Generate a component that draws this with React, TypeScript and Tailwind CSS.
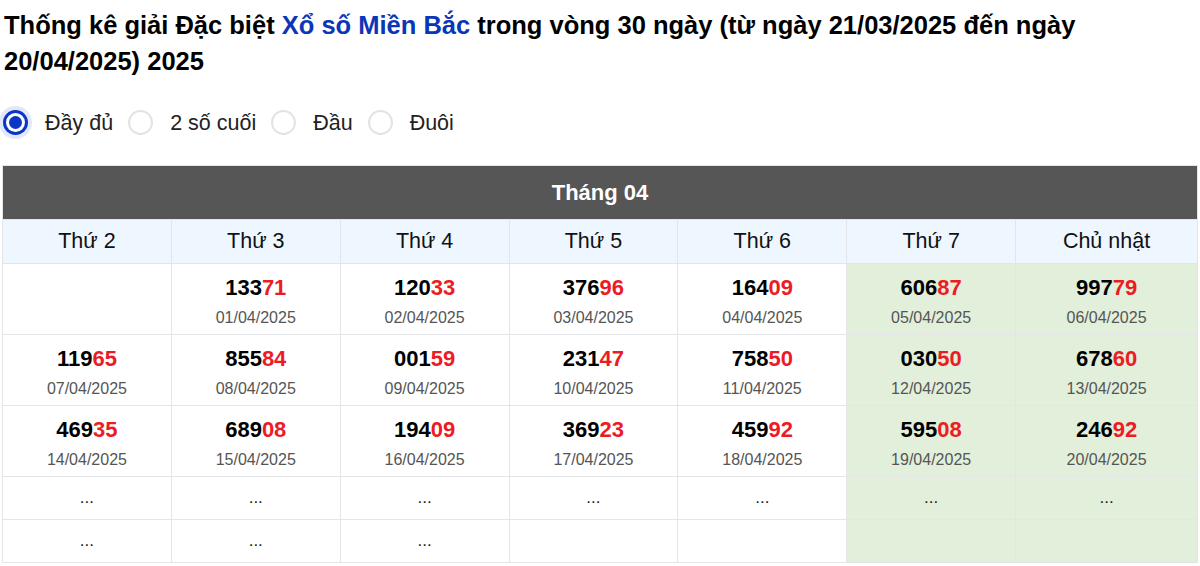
import React from "react";

type Cell = { n: string; d: string } | "..." | null;

const days = ["Thứ 2", "Thứ 3", "Thứ 4", "Thứ 5", "Thứ 6", "Thứ 7", "Chủ nhật"];

const rows: Cell[][] = [
  [
    null,
    { n: "13371", d: "01/04/2025" },
    { n: "12033", d: "02/04/2025" },
    { n: "37696", d: "03/04/2025" },
    { n: "16409", d: "04/04/2025" },
    { n: "60687", d: "05/04/2025" },
    { n: "99779", d: "06/04/2025" },
  ],
  [
    { n: "11965", d: "07/04/2025" },
    { n: "85584", d: "08/04/2025" },
    { n: "00159", d: "09/04/2025" },
    { n: "23147", d: "10/04/2025" },
    { n: "75850", d: "11/04/2025" },
    { n: "03050", d: "12/04/2025" },
    { n: "67860", d: "13/04/2025" },
  ],
  [
    { n: "46935", d: "14/04/2025" },
    { n: "68908", d: "15/04/2025" },
    { n: "19409", d: "16/04/2025" },
    { n: "36923", d: "17/04/2025" },
    { n: "45992", d: "18/04/2025" },
    { n: "59508", d: "19/04/2025" },
    { n: "24692", d: "20/04/2025" },
  ],
  ["...", "...", "...", "...", "...", "...", "..."],
  ["...", "...", "...", null, null, null, null],
];

const options = ["Đầy đủ", "2 số cuối", "Đầu", "Đuôi"];

function Radio({ checked }: { checked: boolean }) {
  if (checked) {
    return (
      <span className="flex h-[25px] w-[25px] items-center justify-center rounded-full bg-[#0b36c4] shadow-[0_0_0_4px_rgba(13,60,220,0.12)]">
        <span className="flex h-[19px] w-[19px] items-center justify-center rounded-full bg-white">
          <span className="h-[13px] w-[13px] rounded-full bg-[#0b36c4]" />
        </span>
      </span>
    );
  }
  return <span className="block h-[25px] w-[25px] rounded-full border-2 border-[#e1e3e7] bg-white" />;
}

export default function App() {
  return (
    <div className="bg-white px-[2px] text-black" style={{ fontFamily: '"Liberation Sans", Arial, sans-serif' }}>
      <h1 className="pl-[2px] pt-[7px] text-[25.5px] font-bold leading-[36px]">
        Thống kê giải Đặc biệt <span className="text-[#0b36b8]">Xổ số Miền Bắc</span> trong vòng 30 ngày (từ ngày
        21/03/2025 đến ngày 20/04/2025) 2025
      </h1>

      <div className="mt-[31px] flex items-center">
        {options.map((o, i) => (
          <label key={o} className="flex items-center">
            <span className={i === 0 ? "ml-[1px]" : "ml-[15px]"}>
              <Radio checked={i === 0} />
            </span>
            <span className="ml-[17px] text-[21.5px] leading-[24px] text-[#222]">{o}</span>
          </label>
        ))}
      </div>

      <table className="mt-[30px] w-full table-fixed border-collapse border border-[#e3e5e8]">
        <colgroup>
          <col className="w-[14.13%]" />
          <col className="w-[14.13%]" />
          <col className="w-[14.13%]" />
          <col className="w-[14.13%]" />
          <col className="w-[14.13%]" />
          <col className="w-[14.13%]" />
          <col />
        </colgroup>
        <thead>
          <tr>
            <th colSpan={7} className="h-[54px] bg-[#565656] text-[22px] font-bold text-white">
              Tháng 04
            </th>
          </tr>
          <tr>
            {days.map((d) => (
              <th
                key={d}
                className="h-[44px] border border-[#e3e5e8] bg-[#eef6ff] text-[21.5px] font-normal text-[#111]"
              >
                {d}
              </th>
            ))}
          </tr>
        </thead>
        <tbody>
          {rows.map((r, ri) => (
            <tr key={ri}>
              {r.map((c, ci) => {
                const weekend = ci >= 5;
                const bg = weekend ? "bg-[#e2efdb]" : "bg-white";
                const tall = ri < 3;
                return (
                  <td
                    key={ci}
                    className={`${bg} border border-[#e3e5e8] text-center ${tall ? "h-[71px] align-top pt-[11px]" : "h-[43px] align-middle"}`}
                  >
                    {c !== null && c !== "..." ? (
                      <div className="flex flex-col items-center">
                        <span className="text-[22px] font-bold leading-[26px]">
                          {c.n.slice(0, 3)}
                          <span className="text-[#ec1c24]">{c.n.slice(3)}</span>
                        </span>
                        <span className="mt-[8px] text-[16px] leading-[18px] text-[#555]">{c.d}</span>
                      </div>
                    ) : c === "..." ? (
                      <span className="text-[17px] leading-[20px] text-[#222]">...</span>
                    ) : null}
                  </td>
                );
              })}
            </tr>
          ))}
        </tbody>
      </table>
    </div>
  );
}
